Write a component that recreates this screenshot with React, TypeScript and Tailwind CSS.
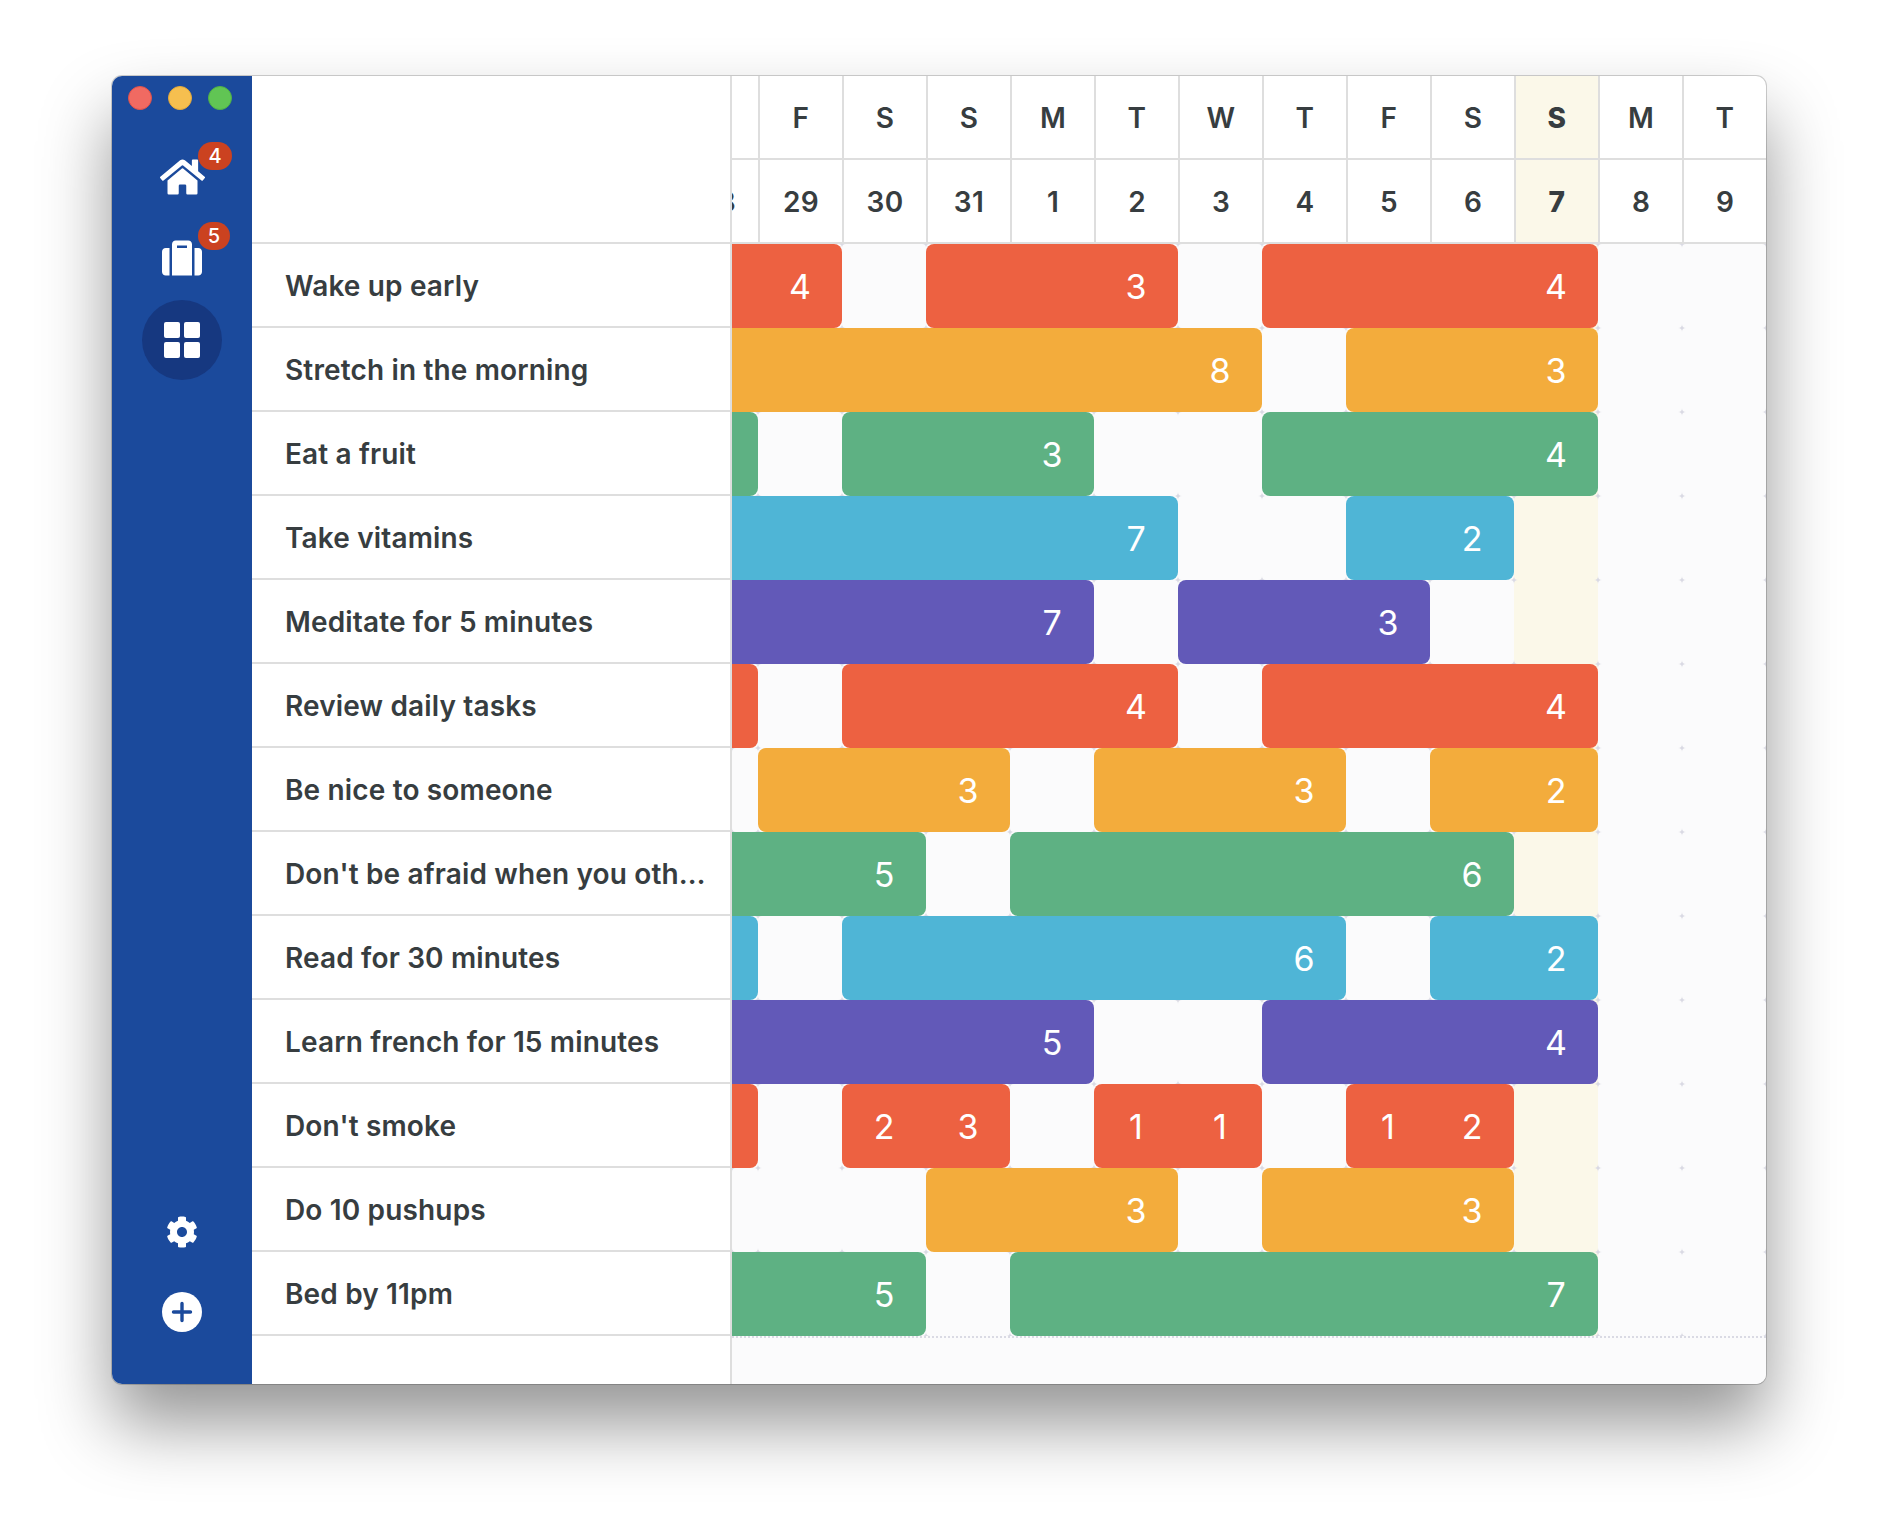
import { FaCog, FaHome, FaSuitcase } from 'react-icons/fa';

const RED = 'bg-[#ed6141]';
const ORANGE = 'bg-[#f3ac3c]';
const GREEN = 'bg-[#5eb183]';
const BLUE = 'bg-[#4fb5d6]';
const PURPLE = 'bg-[#6259b8]';

// columns: 1 is the clipped 28, 2 is F29 ... 11 is today, 13 is T9
const days = [
  ['', '28'], ['F', '29'], ['S', '30'], ['S', '31'], ['M', '1'], ['T', '2'], ['W', '3'],
  ['T', '4'], ['F', '5'], ['S', '6'], ['S', '7'], ['M', '8'], ['T', '9'],
];
const TODAY = 11;

type Bar = { from: number; to: number; nums: Record<number, number> };
type Habit = { name: string; color: string; bars: Bar[] };

const habits: Habit[] = [
  { name: 'Wake up early', color: RED, bars: [
    { from: 1, to: 2, nums: { 2: 4 } }, { from: 4, to: 6, nums: { 6: 3 } }, { from: 8, to: 11, nums: { 11: 4 } },
  ] },
  { name: 'Stretch in the morning', color: ORANGE, bars: [
    { from: 1, to: 7, nums: { 7: 8 } }, { from: 9, to: 11, nums: { 11: 3 } },
  ] },
  { name: 'Eat a fruit', color: GREEN, bars: [
    { from: 1, to: 1, nums: {} }, { from: 3, to: 5, nums: { 5: 3 } }, { from: 8, to: 11, nums: { 11: 4 } },
  ] },
  { name: 'Take vitamins', color: BLUE, bars: [
    { from: 1, to: 6, nums: { 6: 7 } }, { from: 9, to: 10, nums: { 10: 2 } },
  ] },
  { name: 'Meditate for 5 minutes', color: PURPLE, bars: [
    { from: 1, to: 5, nums: { 5: 7 } }, { from: 7, to: 9, nums: { 9: 3 } },
  ] },
  { name: 'Review daily tasks', color: RED, bars: [
    { from: 1, to: 1, nums: {} }, { from: 3, to: 6, nums: { 6: 4 } }, { from: 8, to: 11, nums: { 11: 4 } },
  ] },
  { name: 'Be nice to someone', color: ORANGE, bars: [
    { from: 2, to: 4, nums: { 4: 3 } }, { from: 6, to: 8, nums: { 8: 3 } }, { from: 10, to: 11, nums: { 11: 2 } },
  ] },
  { name: "Don't be afraid when you oth…", color: GREEN, bars: [
    { from: 1, to: 3, nums: { 3: 5 } }, { from: 5, to: 10, nums: { 10: 6 } },
  ] },
  { name: 'Read for 30 minutes', color: BLUE, bars: [
    { from: 1, to: 1, nums: {} }, { from: 3, to: 8, nums: { 8: 6 } }, { from: 10, to: 11, nums: { 11: 2 } },
  ] },
  { name: 'Learn french for 15 minutes', color: PURPLE, bars: [
    { from: 1, to: 5, nums: { 5: 5 } }, { from: 8, to: 11, nums: { 11: 4 } },
  ] },
  { name: "Don't smoke", color: RED, bars: [
    { from: 1, to: 1, nums: {} }, { from: 3, to: 4, nums: { 3: 2, 4: 3 } },
    { from: 6, to: 7, nums: { 6: 1, 7: 1 } }, { from: 9, to: 10, nums: { 9: 1, 10: 2 } },
  ] },
  { name: 'Do 10 pushups', color: ORANGE, bars: [
    { from: 4, to: 6, nums: { 6: 3 } }, { from: 8, to: 10, nums: { 10: 3 } },
  ] },
  { name: 'Bed by 11pm', color: GREEN, bars: [
    { from: 1, to: 3, nums: { 3: 5 } }, { from: 5, to: 11, nums: { 11: 7 } },
  ] },
];

const GRID_COLS = 'grid grid-cols-[26px_repeat(12,84px)]';

function HeaderCell({ col, text }: { col: number; text: string }) {
  const today = col === TODAY;
  return (
    <div
      className={`h-[84px] pt-[2px] border-b-2 border-[#dedede] flex items-center overflow-hidden ${col === 1 ? 'justify-end' : 'justify-center border-l-2'} ${today ? 'bg-[#fbf8e9]' : ''}`}
    >
      <span className={`w-[84px] shrink-0 text-center text-[28px] tracking-[0.3px] text-[#373d40] ${col === 1 ? '-mr-[2px]' : ''} ${today ? 'font-extrabold' : 'font-semibold'}`}>
        {text}
      </span>
    </div>
  );
}

function HabitRow({ habit }: { habit: Habit }) {
  return (
    <div className={`${GRID_COLS} grid-rows-[84px] bg-[#dadae4]`}>
      {days.map((_, i) => (
        <div
          key={i}
          style={{ gridColumn: i + 1, gridRow: 1 }}
          className={`rounded-[4px] ${i + 1 === TODAY ? 'bg-[#fbf8e9]' : 'bg-[#fbfbfc]'}`}
        />
      ))}
      {habit.bars.map((bar, i) => (
        <div
          key={i}
          style={{ gridColumn: `${bar.from} / ${bar.to + 1}`, gridRow: 1 }}
          className={`${habit.color} ${bar.from === 1 ? 'rounded-r-[8px]' : 'rounded-[8px]'}`}
        />
      ))}
      {habit.bars.flatMap((bar) =>
        Object.entries(bar.nums).map(([col, n]) => (
          <div
            key={col}
            style={{ gridColumn: Number(col), gridRow: 1 }}
            className="flex items-center justify-center text-[34px] text-white"
          >
            {n}
          </div>
        )),
      )}
    </div>
  );
}

function Badge({ n, className }: { n: number; className: string }) {
  return (
    <span className={`absolute h-[28px] rounded-full bg-[#cb4220] text-white text-[20px] font-medium flex items-center justify-center ${className}`}>
      {n}
    </span>
  );
}

function Sidebar() {
  return (
    <div className="w-[140px] shrink-0 bg-[#1b4a9c] flex flex-col items-center">
      <div className="flex gap-[16px] pt-[10px] pr-[4px]">
        <span className="w-[24px] h-[24px] rounded-full bg-[#f06a62] border border-[#e0524a]" />
        <span className="w-[24px] h-[24px] rounded-full bg-[#f6bf4f] border border-[#e5a93a]" />
        <span className="w-[24px] h-[24px] rounded-full bg-[#61c554] border border-[#51b146]" />
      </div>

      <div className="relative mt-[27px] w-[80px] h-[80px] flex items-center justify-center">
        <FaHome className="text-white w-[45px] h-[40px]" />
        <Badge n={4} className="w-[34px] left-[56px] top-[5px]" />
      </div>
      <div className="relative mt-[10px] w-[80px] h-[62px] flex items-center justify-center">
        <FaSuitcase className="text-white w-[40px] h-[40px]" />
        <Badge n={5} className="w-[32px] left-[56px] -top-[5px]" />
      </div>
      <div className="mt-[11px] w-[80px] h-[80px] rounded-full bg-[#163880] flex items-center justify-center">
        <svg width="36" height="36" viewBox="0 0 36 36" fill="#fff">
          <rect x="0" y="0" width="16" height="16" rx="2" />
          <rect x="20" y="0" width="16" height="16" rx="2" />
          <rect x="0" y="20" width="16" height="16" rx="2" />
          <rect x="20" y="20" width="16" height="16" rx="2" />
        </svg>
      </div>

      <FaCog className="mt-auto text-white w-[32px] h-[32px]" />
      <svg className="mt-[44px] mb-[52px]" width="40" height="40" viewBox="0 0 40 40">
        <circle cx="20" cy="20" r="20" fill="#fff" />
        <path d="M20 11.5v17M11.5 20h17" stroke="#1b4a9c" strokeWidth="3.4" strokeLinecap="round" />
      </svg>
    </div>
  );
}

export default function App() {
  return (
    <div className="min-h-[1532px] bg-white pl-[112px] pt-[76px] overflow-hidden font-['Inter',sans-serif]">
      <div className="w-[1654px] h-[1308px] rounded-[10px] overflow-hidden flex bg-white shadow-[0_0_0_1px_rgba(0,0,0,0.18),0_40px_70px_0_rgba(0,0,0,0.42)]">
        <Sidebar />

        {/* Habit names */}
        <div className="w-[480px] shrink-0 border-r-2 border-[#dedede] flex flex-col">
          <div className="h-[168px] border-b-2 border-[#dedede]" />
          {habits.map((h) => (
            <div key={h.name} className="h-[84px] pt-[2px] border-b-2 border-[#dedede] pl-[33px] flex items-center text-[28px] font-semibold tracking-[0.15px] text-[#373d40] whitespace-nowrap">
              {h.name}
            </div>
          ))}
        </div>

        {/* Calendar */}
        <div className="flex-1 flex flex-col">
          <div className={GRID_COLS}>
            {days.map((d, i) => <HeaderCell key={i} col={i + 1} text={d[0]} />)}
            {days.map((d, i) => <HeaderCell key={i} col={i + 1} text={d[1]} />)}
          </div>
          {habits.map((h) => <HabitRow key={h.name} habit={h} />)}
          <div className="flex-1 bg-[#fbfbfc] border-t-2 border-dotted border-[#dadae4]" />
        </div>
      </div>
    </div>
  );
}
